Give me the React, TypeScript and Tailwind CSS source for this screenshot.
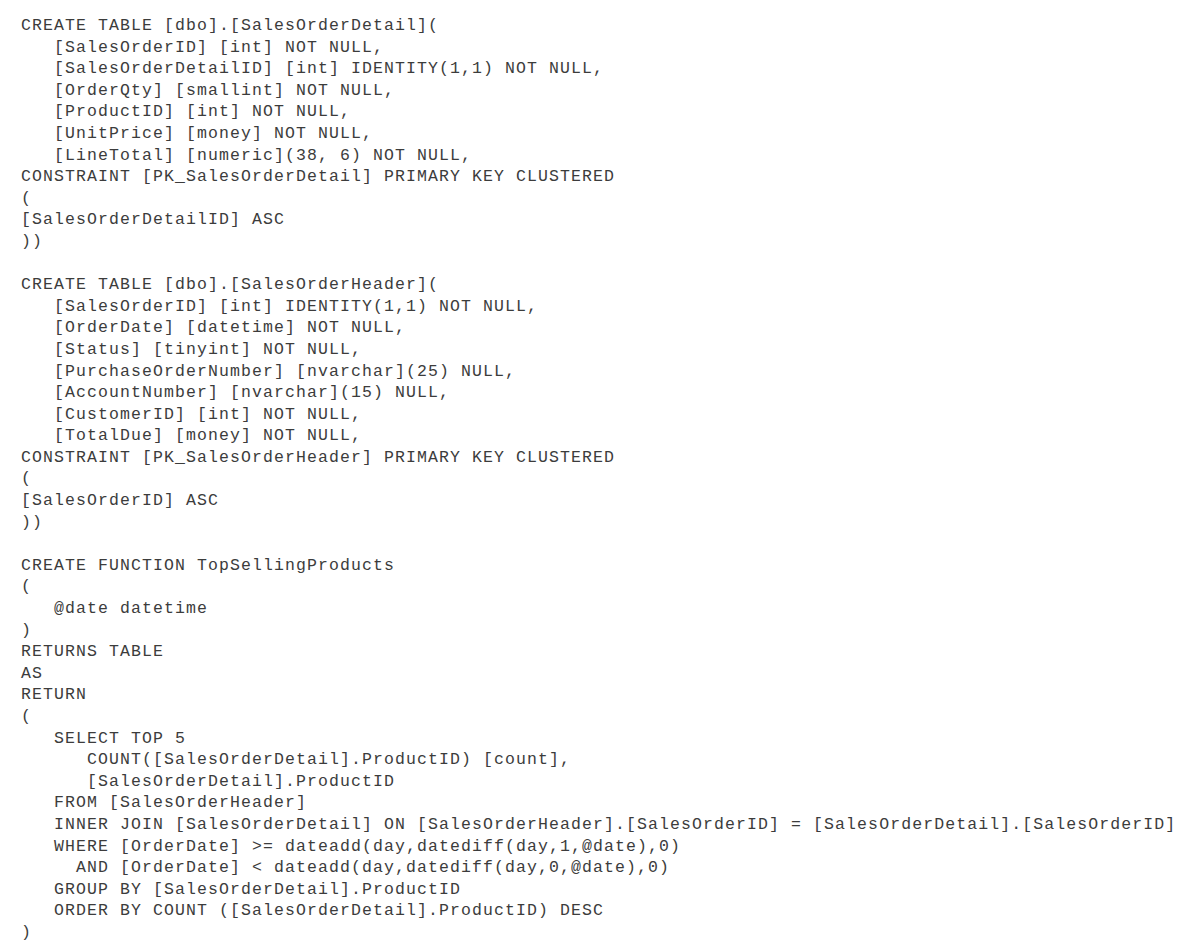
const sql = `CREATE TABLE [dbo].[SalesOrderDetail](
   [SalesOrderID] [int] NOT NULL,
   [SalesOrderDetailID] [int] IDENTITY(1,1) NOT NULL,
   [OrderQty] [smallint] NOT NULL,
   [ProductID] [int] NOT NULL,
   [UnitPrice] [money] NOT NULL,
   [LineTotal] [numeric](38, 6) NOT NULL,
CONSTRAINT [PK_SalesOrderDetail] PRIMARY KEY CLUSTERED
(
[SalesOrderDetailID] ASC
))

CREATE TABLE [dbo].[SalesOrderHeader](
   [SalesOrderID] [int] IDENTITY(1,1) NOT NULL,
   [OrderDate] [datetime] NOT NULL,
   [Status] [tinyint] NOT NULL,
   [PurchaseOrderNumber] [nvarchar](25) NULL,
   [AccountNumber] [nvarchar](15) NULL,
   [CustomerID] [int] NOT NULL,
   [TotalDue] [money] NOT NULL,
CONSTRAINT [PK_SalesOrderHeader] PRIMARY KEY CLUSTERED
(
[SalesOrderID] ASC
))

CREATE FUNCTION TopSellingProducts
(
   @date datetime
)
RETURNS TABLE
AS
RETURN
(
   SELECT TOP 5
      COUNT([SalesOrderDetail].ProductID) [count],
      [SalesOrderDetail].ProductID
   FROM [SalesOrderHeader]
   INNER JOIN [SalesOrderDetail] ON [SalesOrderHeader].[SalesOrderID] = [SalesOrderDetail].[SalesOrderID]
   WHERE [OrderDate] >= dateadd(day,datediff(day,1,@date),0)
     AND [OrderDate] < dateadd(day,datediff(day,0,@date),0)
   GROUP BY [SalesOrderDetail].ProductID
   ORDER BY COUNT ([SalesOrderDetail].ProductID) DESC
)`;

export default function App() {
  return (
    <main className="min-h-screen w-full bg-white pl-[21px] pt-[15px]">
      <pre className="m-0 whitespace-pre font-['Courier_New','Liberation_Mono',monospace] text-[16.5px] leading-[21.6px] tracking-[1.1px] text-[#3c3c3c]">
        {sql}
      </pre>
    </main>
  );
}
